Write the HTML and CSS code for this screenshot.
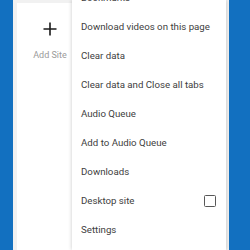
FILE: index.html
```html
<!DOCTYPE html>
<html lang="en">
  <head>
    <meta charset="UTF-8" />
    <meta name="viewport" content="width=device-width, initial-scale=1.0" />
    <link rel="stylesheet" href="styles.css">
    <title>Menu</title>
  </head>
  <body>
    <div class="screen">
      <div class="edge"></div>
      <main class="page">
        <div class="site-card">
          <svg class="plus" width="14" height="14" viewBox="0 0 14 14">
            <path d="M7 0.5v13M0.5 7h13" stroke="#1a1a1a" stroke-width="1.6" fill="none" />
          </svg>
          <span class="add-label">Add Site</span>
        </div>
      </main>
      <div class="edge edge-right"></div>

      <ul class="menu">
        <li class="item first">Bookmarks</li>
        <li class="item">Download videos on this page</li>
        <li class="item">Clear data</li>
        <li class="item">Clear data and Close all tabs</li>
        <li class="item">Audio Queue</li>
        <li class="item">Add to Audio Queue</li>
        <li class="item">Downloads</li>
        <li class="item">Desktop site <span class="check"></span></li>
        <li class="item">Settings</li>
      </ul>
    </div>
  </body>
</html>
```

FILE: styles.css
```css
html,
body {
  margin: 0;
  padding: 0;
  font-family: Roboto, "Liberation Sans", sans-serif;
}

.screen {
  position: relative;
  display: flex;
  width: 250px;
  height: 250px;
  overflow: hidden;
}

.edge {
  width: 13px;
  background: #1270c0;
}

.edge-right {
  width: 21px;
}

.page {
  flex: 1;
  background: #f1f1f1;
  padding: 3px 0 0 4px;
}

.site-card {
  width: 66px;
  height: 100%;
  background: #fff;
  display: flex;
  flex-direction: column;
  align-items: center;
  padding-top: 19px;
  box-sizing: border-box;
}

.plus {
  display: block;
}

.add-label {
  margin-top: 14px;
  font-size: 9px;
  color: #9a9a9a;
}

.menu {
  position: absolute;
  top: 0;
  left: 72px;
  width: 154px;
  height: 250px;
  margin: 0;
  padding: 0;
  list-style: none;
  background: #fff;
  box-shadow: 0 0 4px rgba(0, 0, 0, 0.22);
  overflow: hidden;
}

.item {
  display: flex;
  align-items: center;
  justify-content: space-between;
  height: 29px;
  padding: 0 10px 0 9px;
  font-size: 9.7px;
  color: #404040;
}

.first {
  margin-top: -17px;
}

.check {
  width: 12px;
  height: 12px;
  box-sizing: border-box;
  border: 1.7px solid #585858;
  border-radius: 1.5px;
}
```
